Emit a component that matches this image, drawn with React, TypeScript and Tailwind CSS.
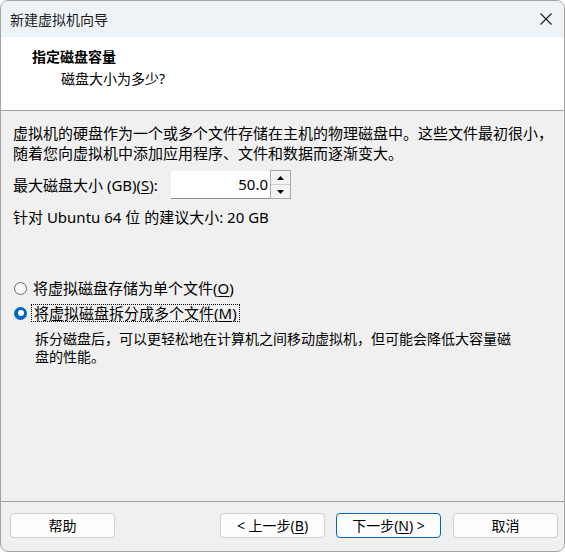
import React from 'react'

const font = { fontFamily: '"Noto Sans", "Noto Sans CJK SC", sans-serif' }

function Btn({ children, primary = false, className = '' }: { children: React.ReactNode; primary?: boolean; className?: string }) {
  return (
    <button
      type="button"
      className={`h-[25px] w-[105px] rounded-[4px] bg-[#fdfdfd] text-[14px] leading-none text-black flex items-center justify-center border ${
        primary ? 'border-[#0067c0]' : 'border-[#d0d0d0]'
      } ${className}`}
    >
      {children}
    </button>
  )
}

function Radio({ checked }: { checked: boolean }) {
  if (checked) {
    return (
      <span className="w-[13px] h-[13px] rounded-full bg-[#0067c0] flex items-center justify-center shrink-0">
        <span className="block w-[6px] h-[6px] rounded-full bg-white" />
      </span>
    )
  }
  return <span className="block w-[13px] h-[13px] rounded-full border border-[#6b6b6b] bg-[#f7f7f7] shrink-0" />
}

export default function App() {
  return (
    <div
      className="w-[565px] h-[552px] bg-[#f0f0f0] flex flex-col border border-[#a3a3a3] rounded-[8px] overflow-hidden text-black"
      style={font}
    >
      {/* Title bar */}
      <div className="h-[36px] bg-[#eef3f8] flex items-center justify-between pl-[9px] pr-[11px] shrink-0">
        <span className="text-[14px] text-[#1b1b1b]">新建虚拟机向导</span>
        <svg width="14" height="14" viewBox="0 0 14 14" fill="none" stroke="#1b1b1b" strokeWidth="1.1">
          <path d="M1.5 1.5 L12.5 12.5 M12.5 1.5 L1.5 12.5" />
        </svg>
      </div>

      {/* Header */}
      <div className="h-[74px] bg-white border-b border-[#a0a0a0] pt-[10px] shrink-0">
        <div className="pl-[31px] text-[14px] font-bold leading-[20px]">指定磁盘容量</div>
        <div className="pl-[60px] text-[14px] leading-[20px] mt-[2px]">磁盘大小为多少?</div>
      </div>

      {/* Body */}
      <div className="flex-1 pl-[12px] pt-[12px] text-[15px]">
        <p className="leading-[20px] whitespace-nowrap">
          虚拟机的硬盘作为一个或多个文件存储在主机的物理磁盘中。这些文件最初很小，
          <br />
          随着您向虚拟机中添加应用程序、文件和数据而逐渐变大。
        </p>

        <div className="flex items-center mt-[7px] h-[29px]">
          <span className="w-[158px] leading-[20px]">
            最大磁盘大小 (GB)(<span className="underline underline-offset-2">S</span>):
          </span>
          <div className="h-[28px] w-[99px] bg-white border-b border-[#8d8d8d] flex items-center justify-end pr-[2px]">
            50.0
          </div>
          <div className="h-[29px] w-[21px] border border-[#a8a8a8] flex flex-col bg-[#f0f0f0]">
            <div className="flex-1 border-b border-[#cfcfcf] bg-[#f3f3f3] flex items-center justify-center">
              <svg width="7" height="4" viewBox="0 0 7 4">
                <path d="M0 4 L3.5 0 L7 4 Z" fill="#000" />
              </svg>
            </div>
            <div className="flex-1 bg-[#f3f3f3] flex items-center justify-center">
              <svg width="7" height="4" viewBox="0 0 7 4">
                <path d="M0 0 L7 0 L3.5 4 Z" fill="#000" />
              </svg>
            </div>
          </div>
        </div>

        <p className="leading-[20px] mt-[8px]">针对 Ubuntu 64 位 的建议大小: 20 GB</p>

        <div className="mt-[51px] flex items-center h-[20px]">
          <span className="ml-[1px] mr-[6px]">
            <Radio checked={false} />
          </span>
          <span className="leading-[20px]">
            将虚拟磁盘存储为单个文件(<span className="underline underline-offset-2">O</span>)
          </span>
        </div>

        <div className="mt-[5px] flex items-center h-[20px]">
          <span className="ml-[1px] mr-[4px]">
            <Radio checked />
          </span>
          <span className="leading-[16px] px-[2px] border border-dotted border-black">
            将虚拟磁盘拆分成多个文件(<span className="underline underline-offset-2">M</span>)
          </span>
        </div>

        <p className="mt-[7px] pl-[22px] text-[14px] leading-[18px] whitespace-nowrap">
          拆分磁盘后，可以更轻松地在计算机之间移动虚拟机，但可能会降低大容量磁
          <br />
          盘的性能。
        </p>
      </div>

      {/* Footer */}
      <div className="h-[50px] border-t border-[#a0a0a0] pt-[11px] pl-[9px] pr-[6px] flex items-start shrink-0">
        <Btn>帮助</Btn>
        <div className="flex-1" />
        <Btn>
          &lt; 上一步(<span className="underline underline-offset-2">B</span>)
        </Btn>
        <Btn primary className="ml-[11px]">
          下一步(<span className="underline underline-offset-2">N</span>) &gt;
        </Btn>
        <Btn className="ml-[12px] w-[104px]">取消</Btn>
      </div>
    </div>
  )
}
